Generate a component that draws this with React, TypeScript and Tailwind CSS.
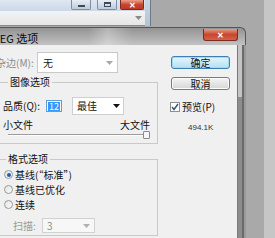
import React from 'react';

const Tri = ({ color }: { color: string }) => (
  <svg width="7" height="4" viewBox="0 0 7 4">
    <path d="M0 0 L7 0 L3.5 4 Z" fill={color} />
  </svg>
);

const WinButton = ({ label, primary }: { label: string; primary?: boolean }) => (
  <div
    className={
      primary
        ? 'h-[13px] w-[59px] rounded-[3px] border border-[#3c7fb1] bg-gradient-to-b from-[#e5f5fc] to-[#b6dff3] shadow-[inset_0_0_0_1px_#9fdcf5] flex items-center justify-center text-[10px] leading-none text-[#111]'
        : 'h-[13px] w-[59px] rounded-[3px] border border-[#7a7a7a] bg-gradient-to-b from-[#f4f4f4] to-[#d6d6d6] shadow-[inset_0_0_0_1px_#fbfbfb] flex items-center justify-center text-[10px] leading-none text-[#111]'
    }
  >
    {label}
  </div>
);

const Radio = ({ label, checked }: { label: string; checked?: boolean }) => (
  <div className="h-[15px] flex items-center ml-[8px]">
    <div className="w-[9px] h-[9px] rounded-full border border-[#9a9a9a] bg-gradient-to-br from-[#e4e4e4] to-[#fbfbfb] flex items-center justify-center">
      {checked && <div className="w-[4px] h-[4px] rounded-full bg-[#1e5fa8]" />}
    </div>
    <span className="ml-[2px] text-[10px] leading-none text-[#111]">{label}</span>
  </div>
);

export default function App() {
  return (
    <div className="w-[275px] h-[238px] overflow-hidden bg-[#a9a9a9] flex font-['Noto_Sans_CJK_SC','Noto_Sans',sans-serif]">
      <div className="w-[264px] flex flex-col">
        {/* window behind the dialog */}
        <div className="h-[27px] flex">
          <div className="w-[151px] h-[26px] flex">
            <div className="flex-1 flex flex-col">
              <div className="h-[11px] bg-gradient-to-b from-[#dfe8f2] to-[#cbd8e6] flex items-start">
                <div className="ml-[71px] w-[20px] h-[10px] rounded-b-[2px] border border-t-0 border-[#7f8fa3] bg-gradient-to-b from-[#e8eef5] to-[#bccbdb] flex items-center justify-center">
                  <div className="w-[7px] h-[2px] bg-[#3f4a56] mt-[3px]" />
                </div>
                <div className="ml-[6px] w-[20px] h-[10px] rounded-b-[2px] border border-t-0 border-[#7f8fa3] bg-gradient-to-b from-[#e8eef5] to-[#bccbdb] flex items-center justify-center">
                  <div className="w-[7px] h-[5px] border border-t-2 border-[#3f4a56]" />
                </div>
                <div className="ml-[3px] w-[24px] h-[10px] rounded-b-[2px] border border-t-0 border-[#7e2a1f] bg-gradient-to-b from-[#e9a08c] via-[#c9452e] to-[#b83a24] flex items-center justify-center text-white text-[8px] leading-none font-bold">
                  ✕
                </div>
              </div>
              <div className="flex-1 bg-gradient-to-b from-[#f3f3f3] to-[#e6e6e6] border-b border-[#8a8a8a] flex items-center justify-end pr-[3px]">
                <Tri color="#8a8a8a" />
              </div>
            </div>
            <div className="w-[6px] bg-gradient-to-b from-[#c8d6e5] to-[#b4c3d3] border-r border-[#6f7a86]" />
          </div>
        </div>

        {/* JPEG options dialog */}
        <div className="w-[246px] flex-1 flex flex-col">
          <div className="h-[18px] rounded-tr-[6px] border-t border-r border-[#555] bg-[linear-gradient(90deg,transparent_36%,rgba(255,255,255,0.3)_44%,transparent_54%),linear-gradient(180deg,#939393,#c2c2c2)] flex items-start justify-between pr-[7px]">
            <span className="-ml-[13px] mt-[4px] text-[11px] leading-[12px] text-[#0a0a0a]">JPEG 选项</span>
            <div className="mt-[1px] w-[35px] h-[12px] rounded-b-[3px] border border-t-0 border-[#7d2a20] bg-gradient-to-b from-[#e59a88] via-[#c8462f] to-[#d4624a] flex items-center justify-center text-white text-[8px] leading-none font-bold">
              ✕
            </div>
          </div>

          <div className="flex-1 flex">
            <div className="w-[237px] bg-[#f0f0f0] flex">
              {/* left column */}
              <div className="w-[160px] flex flex-col pt-[7px]">
                <div className="h-[21px] flex items-center">
                  <span className="-ml-[4px] w-[41px] text-[10px] leading-none text-[#8c8c8c]">杂边(M):</span>
                  <div className="w-[81px] h-[21px] border border-[#c9c9c9] bg-white flex items-center justify-between pl-[5px] pr-[4px]">
                    <span className="text-[10px] leading-none text-[#222]">无</span>
                    <Tri color="#a8a8a8" />
                  </div>
                </div>

                <fieldset className="mt-[3px] -ml-[5px] w-[163px] border border-[#c9c9c9] pb-[4px]">
                  <legend className="ml-[12px] px-[2px] text-[10px] leading-[12px] text-[#111]">图像选项</legend>
                  <div className="mt-[9px] h-[18px] flex items-center">
                    <span className="ml-[7px] w-[43px] text-[10px] leading-none text-[#111]">品质(Q):</span>
                    <div className="w-[16px] h-[12px] border border-[#5e9ed6] bg-white flex items-center justify-center">
                      <span className="bg-[#3399ff] text-white text-[9px] leading-[9px] px-[1px]">12</span>
                    </div>
                    <div className="ml-[10px] w-[52px] h-[18px] border border-[#cfcfcf] bg-white flex items-center justify-between pl-[4px] pr-[3px]">
                      <span className="text-[10px] leading-none text-[#111]">最佳</span>
                      <Tri color="#111" />
                    </div>
                  </div>
                  <div className="mt-[4px] h-[12px] flex items-center justify-between pl-[7px] pr-[7px]">
                    <span className="text-[10px] leading-none text-[#111]">小文件</span>
                    <span className="text-[10px] leading-none text-[#111]">大文件</span>
                  </div>
                  <div className="h-[8px] flex items-center pl-[12px] pr-[7px]">
                    <div className="flex-1 h-[2px] border-t border-[#9c9c9c] border-b border-b-white" />
                    <div className="w-[7px] h-[8px] border border-[#8a8a8a] bg-[#f6f6f6] rounded-[1px]" />
                  </div>
                </fieldset>

                <fieldset className="mt-[9px] -ml-[5px] w-[163px] border border-[#c9c9c9] pb-[2px]">
                  <legend className="ml-[10px] px-[2px] text-[10px] leading-[12px] text-[#111]">格式选项</legend>
                  <div className="mt-[2px]" />
                  <Radio label="基线(“标准”)" checked />
                  <Radio label="基线已优化" />
                  <Radio label="连续" />
                  <div className="mt-[6px] h-[15px] flex items-center">
                    <span className="ml-[17px] w-[29px] text-[10px] leading-none text-[#9a9a9a]">扫描:</span>
                    <div className="w-[53px] h-[15px] border border-[#d2d2d2] bg-[#f7f7f7] flex items-center justify-between pl-[4px] pr-[4px]">
                      <span className="text-[10px] leading-none text-[#8a8a8a]">3</span>
                      <Tri color="#b0b0b0" />
                    </div>
                  </div>
                </fieldset>
              </div>

              {/* right column */}
              <div className="flex flex-col pl-[11px] pt-[11px]">
                <WinButton label="确定" primary />
                <div className="mt-[8px]">
                  <WinButton label="取消" />
                </div>
                <div className="mt-[12px] h-[10px] flex items-center -ml-[1px]">
                  <div className="w-[10px] h-[10px] border border-[#8f8f8f] bg-white flex items-center justify-center">
                    <svg width="8" height="8" viewBox="0 0 8 8">
                      <path d="M1 4 L3 6.5 L7 1" stroke="#3a4f7a" strokeWidth="1.4" fill="none" />
                    </svg>
                  </div>
                  <span className="ml-[2px] text-[10px] leading-none text-[#111]">预览(P)</span>
                </div>
                <span className="mt-[10px] ml-[17px] text-[8px] leading-[12px] text-[#333] font-['Liberation_Sans',sans-serif]">494.1K</span>
              </div>
            </div>

            {/* dialog frame, right edge */}
            <div className="w-[9px] flex">
              <div className="w-[1px] bg-[#7a7a7a]" />
              <div className="w-[4px] flex flex-col">
                <div className="h-[52px] bg-[#c4c4c4]" />
                <div className="flex-1 bg-[#8d8d8d]" />
              </div>
              <div className="w-[2px] bg-[#6a6a6a]" />
              <div className="w-[2px] bg-[#9a9a9a]" />
            </div>
          </div>
        </div>
      </div>
      {/* lighter strip at the far right */}
      <div className="flex-1 bg-[#c6c6c6]" />
    </div>
  );
}
